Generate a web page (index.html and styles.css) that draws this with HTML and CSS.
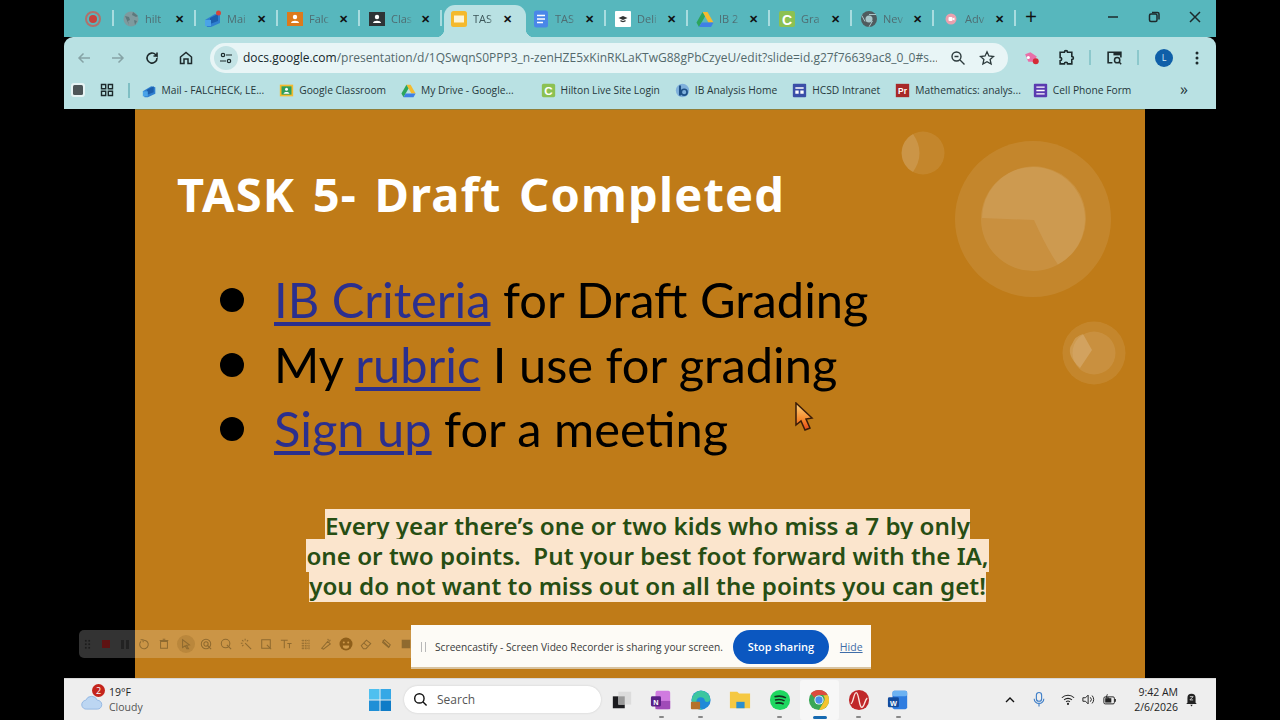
FILE: index.html
```html
<!DOCTYPE html>
<html lang="en">
<head>
<meta charset="utf-8">
<title>TASK 5 - Draft Completed</title>
<link rel="stylesheet" href="styles.css">
</head>
<body>
<div class="window">
  <header class="tabstrip">
    <div class="tab tab-pin">
      <svg class="fav" viewBox="0 0 18 18"><circle cx="9" cy="9" r="7" fill="none" stroke="#b0716c" stroke-width="2"/><circle cx="9" cy="9" r="4" fill="#c8423c"/></svg>
      <i class="sep"></i>
    </div>
    <div class="tab">
      <svg class="fav" viewBox="0 0 18 18"><circle cx="9" cy="9" r="7.5" fill="#7f9a9e"/><path d="M3 6l4 1 1 3-2 1 1 4M11 2l-1 3 4 2 2-1M12 10l3 1-2 4z" fill="#5d787c"/></svg>
      <span class="tab-title">hilt</span><span class="x">✕</span><i class="sep"></i>
    </div>
    <div class="tab">
      <svg class="fav" viewBox="0 0 18 18"><path d="M1 10l10-6 5 1v8l-9 4H3z" fill="#2f7fd0"/><path d="M6 8l8-4v7l-8 3z" fill="#1b5fae"/><rect x="1" y="10" width="6" height="6" fill="#4aa3e8"/><circle cx="14.500" cy="3" r="2.500" fill="#d6453c"/></svg>
      <span class="tab-title">Mai</span><span class="x">✕</span><i class="sep"></i>
    </div>
    <div class="tab">
      <svg class="fav" viewBox="0 0 18 18"><rect x="1" y="2" width="16" height="14" fill="#dc7a1c"/><circle cx="9" cy="7" r="2.200" fill="#fff"/><path d="M5 13c0-3 8-3 8 0z" fill="#fff"/></svg>
      <span class="tab-title">Falc</span><span class="x">✕</span><i class="sep"></i>
    </div>
    <div class="tab">
      <svg class="fav" viewBox="0 0 18 18"><rect x="1" y="2" width="16" height="14" fill="#2e3436"/><circle cx="9" cy="7" r="2.200" fill="#fff"/><path d="M5 13c0-3 8-3 8 0z" fill="#fff"/></svg>
      <span class="tab-title">Clas</span><span class="x">✕</span><i class="sep"></i>
    </div>
    <div class="tab tab-active">
      <svg class="fav" viewBox="0 0 18 18"><rect x="1" y="1" width="16" height="16" rx="2.500" fill="#f4b92d"/><rect x="4" y="5.500" width="10" height="7" fill="#fdf4d6"/></svg>
      <span class="tab-title">TAS</span><span class="x">✕</span>
    </div>
    <div class="tab">
      <svg class="fav" viewBox="0 0 18 18"><rect x="2" y="0.500" width="14" height="17" rx="2.500" fill="#4a87e8"/><path d="M5 5.500h8M5 9h8M5 12.500h6" stroke="#fff" stroke-width="1.500"/></svg>
      <span class="tab-title">TAS</span><span class="x">✕</span><i class="sep"></i>
    </div>
    <div class="tab">
      <svg class="fav" viewBox="0 0 18 18"><rect x="1" y="1" width="16" height="16" rx="1" fill="#fff"/><path d="M4.500 8L9 6l4.500 2L9 10z" fill="#333"/><path d="M6.500 10v1.500l2.500.8 2.500-.8V10L9 11z" fill="#333"/></svg>
      <span class="tab-title">Deli</span><span class="x">✕</span><i class="sep"></i>
    </div>
    <div class="tab">
      <svg class="fav" viewBox="0 0 18 18"><path d="M6.500 2h5l6 10.500h-5z" fill="#f5bb2e"/><path d="M6.500 2L.500 12.500 3 17l6-10.500z" fill="#2ca55c"/><path d="M3 17h12l2.500-4.500h-12z" fill="#3f7fe6"/></svg>
      <span class="tab-title">IB 2</span><span class="x">✕</span><i class="sep"></i>
    </div>
    <div class="tab">
      <svg class="fav" viewBox="0 0 18 18"><rect x="1" y="1" width="16" height="16" rx="2" fill="#8cc152"/><text class="fav-letter" x="9" y="14.500">C</text></svg>
      <span class="tab-title">Gra</span><span class="x">✕</span><i class="sep"></i>
    </div>
    <div class="tab">
      <svg class="fav" viewBox="0 0 18 18"><circle cx="9" cy="9" r="8" fill="#4f5b5e"/><circle cx="9" cy="9" r="3.500" fill="#a9c6c9"/><path d="M9 4.500h7M5 11.500L1.800 5.500M12.500 11L9 16.800" stroke="#a9c6c9" stroke-width="1"/></svg>
      <span class="tab-title">Nev</span><span class="x">✕</span><i class="sep"></i>
    </div>
    <div class="tab">
      <svg class="fav" viewBox="0 0 18 18"><circle cx="9" cy="9" r="5.500" fill="#e9a0ae"/><rect x="6.500" y="7" width="4" height="4" rx="1" fill="#fff"/><path d="M10.500 8.500l2-1v3l-2-1z" fill="#fff"/></svg>
      <span class="tab-title">Adv</span><span class="x">✕</span><i class="sep"></i>
    </div>
    <span class="newtab">+</span>
    <div class="winctl">
      <svg class="ctl" viewBox="0 0 14 14"><path d="M2 7h10" stroke="#1d2a2c" stroke-width="1.500"/></svg>
      <svg class="ctl" viewBox="0 0 14 14"><rect x="2.500" y="4" width="7.500" height="7.500" rx="1.500" fill="none" stroke="#1d2a2c" stroke-width="1.500"/><path d="M5 2.500h5.500a1.500 1.500 0 0 1 1.500 1.500v5.500" fill="none" stroke="#1d2a2c" stroke-width="1.500"/></svg>
      <svg class="ctl" viewBox="0 0 14 14"><path d="M2 2l10 10M12 2L2 12" stroke="#1d2a2c" stroke-width="1.500"/></svg>
    </div>
  </header>

  <nav class="toolbar">
    <svg class="tool" viewBox="0 0 16 16"><path d="M14 8H3M7.500 3.500L3 8l4.500 4.500" fill="none" stroke="#86a3a6" stroke-width="1.500"/></svg>
    <svg class="tool" viewBox="0 0 16 16"><path d="M2 8h11M8.500 3.500L13 8l-4.500 4.500" fill="none" stroke="#86a3a6" stroke-width="1.500"/></svg>
    <svg class="tool" viewBox="0 0 16 16"><path d="M13 8a5 5 0 1 1-1.500-3.500L13 6V2.500M13 6H9.500" fill="none" stroke="#1d2a2c" stroke-width="1.600"/></svg>
    <svg class="tool" viewBox="0 0 16 16"><path d="M2.500 7L8 2.500 13.500 7v6.500H10V9H6v4.500H2.500z" fill="none" stroke="#1d2a2c" stroke-width="1.500"/></svg>
    <div class="omnibox">
      <span class="site-chip"><svg class="site-ic" viewBox="0 0 14 14"><circle cx="4" cy="4" r="1.700" fill="none" stroke="#1d2a2c" stroke-width="1.200"/><circle cx="10" cy="10" r="1.700" fill="none" stroke="#1d2a2c" stroke-width="1.200"/><path d="M7 4h6M1 10h6" stroke="#1d2a2c" stroke-width="1.200"/></svg></span>
      <span class="url"><b>docs.google.com</b>/presentation/d/1QSwqnS0PPP3_n-zenHZE5xKinRKLaKTwG88gPbCzyeU/edit?slide=id.g27f76639ac8_0_0#s...</span>
      <svg class="omni-ic" viewBox="0 0 16 16"><circle cx="6.500" cy="6.500" r="4.500" fill="none" stroke="#2c3a3c" stroke-width="1.400"/><path d="M10 10l4.500 4.500M4.500 6.500h4" stroke="#2c3a3c" stroke-width="1.400"/></svg>
      <svg class="omni-ic" viewBox="0 0 16 16"><path d="M8 1.800l1.900 4.200 4.600.5-3.400 3 1 4.500-4.100-2.300L3.900 14l1-4.500-3.400-3 4.600-.5z" fill="none" stroke="#2c3a3c" stroke-width="1.300"/></svg>
    </div>
    <svg class="ext" viewBox="0 0 16 16"><path d="M2 5l5-2 6 4-3 5H5z" fill="#e86fa8"/><circle cx="5" cy="8" r="1.500" fill="#fff"/><circle cx="12" cy="11.500" r="2.800" fill="#d42a35"/></svg>
    <svg class="tool2" viewBox="0 0 16 16"><path d="M2 3h4a1.500 1.500 0 0 1 3 0h4v4a1.500 1.500 0 0 1 0 3v4H9a1.500 1.500 0 0 0-3 0H2v-3a1.500 1.500 0 0 0 0-3z" fill="none" stroke="#1d2a2c" stroke-width="1.500"/></svg>
    <i class="tsep"></i>
    <svg class="tool2" viewBox="0 0 16 16"><path d="M6 13H2V3h12v5" fill="none" stroke="#1d2a2c" stroke-width="1.500"/><path d="M7 3h7v3H7z" fill="#1d2a2c"/><circle cx="10.500" cy="10.500" r="2.500" fill="none" stroke="#1d2a2c" stroke-width="1.400"/><path d="M12.300 12.300l2 2" stroke="#1d2a2c" stroke-width="1.400"/></svg>
    <i class="tsep"></i>
    <span class="avatar">L</span>
    <svg class="menu" viewBox="0 0 4 16"><circle cx="2" cy="3" r="1.500" fill="#1d2a2c"/><circle cx="2" cy="8" r="1.500" fill="#1d2a2c"/><circle cx="2" cy="13" r="1.500" fill="#1d2a2c"/></svg>
  </nav>

  <div class="bookmarks">
    <svg class="bm-first" viewBox="0 0 16 16"><rect x="1" y="1" width="14" height="14" rx="3" fill="#e6f4f5"/><rect x="3" y="3" width="10" height="10" rx="1.500" fill="#4d5659"/></svg>
    <svg class="bm-grid" viewBox="0 0 14 14"><path d="M1.500 1.500h4.200v4.200H1.500zM8.300 1.500h4.200v4.200H8.300zM1.500 8.300h4.200v4.200H1.500zM8.300 8.300h4.200v4.200H8.300z" fill="none" stroke="#1d2a2c" stroke-width="1.400"/></svg>
    <i class="bsep"></i>
    <div class="bm"><svg class="bm-ic" viewBox="0 0 18 18"><path d="M1 10l10-6 5 1v8l-9 4H3z" fill="#2f7fd0"/><path d="M6 8l8-4v7l-8 3z" fill="#1b5fae"/><rect x="1" y="10" width="6" height="6" fill="#4aa3e8"/></svg>Mail - FALCHECK, LE...</div>
    <div class="bm"><svg class="bm-ic" viewBox="0 0 18 18"><rect x="1" y="2" width="16" height="14" fill="#f5bb2e"/><rect x="3" y="4" width="12" height="10" fill="#2f9e5c"/><circle cx="9" cy="7.500" r="1.800" fill="#fff"/><path d="M5.500 13c0-3 7-3 7 0z" fill="#fff"/></svg>Google Classroom</div>
    <div class="bm bm-wide"><svg class="bm-ic" viewBox="0 0 18 18"><path d="M6.500 2h5l6 10.500h-5z" fill="#f5bb2e"/><path d="M6.500 2L.500 12.500 3 17l6-10.500z" fill="#2ca55c"/><path d="M3 17h12l2.500-4.500h-12z" fill="#3f7fe6"/></svg>My Drive - Google...</div>
    <div class="bm"><svg class="bm-ic" viewBox="0 0 18 18"><rect x="1" y="1" width="16" height="16" rx="2" fill="#8cc152"/><text class="fav-letter" x="9" y="14.500">C</text></svg>Hilton Live Site Login</div>
    <div class="bm"><svg class="bm-ic" viewBox="0 0 18 18"><circle cx="9" cy="9" r="8" fill="#7fb0dc"/><path d="M6 3v12" stroke="#1d4f86" stroke-width="2.500"/><circle cx="11" cy="11" r="3.500" fill="none" stroke="#1d4f86" stroke-width="2"/></svg>IB Analysis Home</div>
    <div class="bm"><svg class="bm-ic" viewBox="0 0 18 18"><rect x="1" y="1" width="16" height="16" rx="1" fill="#3b4fa8"/><path d="M4 5h10v2H4zM4 9h4v4H4zM10 9h4v4h-4z" fill="#fff"/></svg>HCSD Intranet</div>
    <div class="bm bm-tight"><svg class="bm-ic" viewBox="0 0 18 18"><rect x="1" y="1" width="16" height="16" fill="#a82828"/><text class="fav-pr" x="9" y="13.500">Pr</text></svg>Mathematics: analys...</div>
    <div class="bm"><svg class="bm-ic" viewBox="0 0 18 18"><rect x="1" y="1" width="16" height="16" rx="1" fill="#5a3bb0"/><path d="M4 5h10M4 9h10M4 13h10" stroke="#fff" stroke-width="1.600"/></svg>Cell Phone Form</div>
    <span class="bm-more">»</span>
  </div>

  <main class="stage">
    <section class="slide">
      <svg class="deco" viewBox="0 0 1010 569">
        <g fill="#fff">
          <circle cx="898" cy="110" r="78" opacity=".09"/>
          <circle cx="898" cy="110" r="52" opacity=".09"/>
          <path d="M847 109A52 52 0 1 1 923 155.500Q912 140 899 111z" opacity=".09"/>
          <circle cx="788" cy="44" r="21.500" opacity=".09"/>
          <path d="M778 25Q791 44 778 63A21.500 21.500 0 0 1 778 25z" opacity=".13"/>
          <circle cx="959" cy="244" r="31.500" opacity=".09"/>
          <circle cx="959" cy="244" r="21.500" opacity=".09"/>
          <path d="M948 225L957 241 945 259Q930 245 937 235 940 227 948 225z" opacity=".17"/>
        </g>
      </svg>
      <h1 class="title">TASK 5- Draft Completed</h1>
      <ul class="points">
        <li><a>IB Criteria</a> for Draft Grading</li>
        <li>My <a>rubric</a> I use for grading</li>
        <li><a>Sign up</a> for a meeting</li>
      </ul>
      <p class="note"><span>Every year there’s one or two kids who miss a 7 by only<br>one or two points.&nbsp; Put your best foot forward with the IA,<br>you do not want to miss out on all the points you can get!</span></p>
      <svg class="cursor" viewBox="0 0 20 30"><defs><linearGradient id="cg" x1="0" y1="0" x2="0" y2="1"><stop offset="0" stop-color="#fdd27a"/><stop offset=".6" stop-color="#f58a2c"/><stop offset="1" stop-color="#e8481c"/></linearGradient></defs><path d="M2 1l16 15-6 1 4 9-5 2-4-9-5 4z" fill="url(#cg)" stroke="#3a1c08" stroke-width="1.500"/></svg>
    </section>
  </main>

  <footer class="taskbar">
    <div class="weather">
      <svg class="cloud" viewBox="0 0 24 18"><path d="M6 17a5 5 0 0 1-1-10 7 7 0 0 1 13 0 5 5 0 0 1 0 10z" fill="#bcd6f2" stroke="#8fb5e2"/></svg>
      <span class="badge">2</span>
      <div class="weather-text"><span>19°F</span><span class="muted">Cloudy</span></div>
    </div>
    <div class="task-center">
      <svg class="winlogo" viewBox="0 0 22 22"><path d="M0 0h10.500v10.500H0z" fill="#4fc0ef"/><path d="M11.500 0H22v10.500H11.500z" fill="#35a8e6"/><path d="M0 11.500h10.500V22H0z" fill="#1f8fd6"/><path d="M11.500 11.500H22V22H11.500z" fill="#0f7cc7"/></svg>
      <div class="search"><svg class="search-ic" viewBox="0 0 16 16"><circle cx="6.800" cy="6.800" r="5" fill="none" stroke="#111" stroke-width="1.500"/><path d="M10.500 10.500l4 4" stroke="#111" stroke-width="1.500"/></svg>Search</div>
      <div class="apps">
        <span class="app"><svg class="app-ic" viewBox="0 0 24 24"><rect x="2" y="8" width="13" height="13" fill="#1b1b1f"/><rect x="8" y="3" width="14" height="14" fill="#dcdcdc"/><rect x="8" y="8" width="7" height="9" fill="#9a9a9a"/></svg></span>
        <span class="app"><svg class="app-ic" viewBox="0 0 24 24"><rect x="6" y="2" width="16" height="20" rx="2" fill="#d07be0"/><rect x="6" y="13" width="16" height="9" fill="#a04bb8"/><rect x="1" y="8" width="11" height="11" rx="1.500" fill="#5a1f86"/><text class="app-letter" x="6.500" y="17">N</text></svg><i class="dot"></i></span>
        <span class="app"><svg class="app-ic" viewBox="0 0 24 24"><circle cx="12" cy="12" r="10.500" fill="#1f8ad8"/><path d="M2 13a10 10 0 0 1 20-2c0 4-6 4-6 1 0-4-9-5-9 2 0 4 3 7 7 8a10 10 0 0 1-12-9z" fill="#3cc6a0"/><rect x="1" y="14" width="10" height="8" rx="1" fill="#b5722a"/></svg><i class="dot"></i></span>
        <span class="app"><svg class="app-ic" viewBox="0 0 24 24"><path d="M1 3h8l2 2h12v16H1z" fill="#f5c842"/><rect x="8" y="14" width="9" height="7" fill="#2b8fd0"/></svg></span>
        <span class="app"><svg class="app-ic" viewBox="0 0 24 24"><circle cx="12" cy="12" r="11" fill="#1ed760"/><path d="M6 8.500c4-1 9-.8 12.500 1.200M6.500 12c3.500-.8 8-.5 10.500 1M7 15.500c3-.6 6.500-.4 9 .8" fill="none" stroke="#14301f" stroke-width="1.800"/></svg><i class="dot"></i></span>
        <span class="app app-on"><svg class="app-ic" viewBox="0 0 24 24"><circle cx="12" cy="12" r="11" fill="#3aa757"/><path d="M12 1a11 11 0 0 1 9.500 5.500H12a5.500 5.500 0 0 0-5 3L3 5A11 11 0 0 1 12 1z" fill="#dd4b3e"/><path d="M21.500 6.500A11 11 0 0 1 12 23l4.800-8.300A5.500 5.500 0 0 0 16.500 7z" fill="#f5c32e"/><circle cx="12" cy="12" r="5" fill="#fff"/><circle cx="12" cy="12" r="4" fill="#4a8fe8"/></svg><i class="dash"></i></span>
        <span class="app"><svg class="app-ic" viewBox="0 0 24 24"><circle cx="12" cy="12" r="11" fill="#c0282a"/><path d="M3 16c3 0 3-12 6-12s3 16 6 16 3-8 6-10" fill="none" stroke="#fbe6e0" stroke-width="1.500"/></svg><i class="dot"></i></span>
        <span class="app"><svg class="app-ic" viewBox="0 0 24 24"><rect x="6" y="2" width="16" height="20" rx="2" fill="#2f7de0"/><rect x="6" y="2" width="16" height="6" rx="2" fill="#6cb2f2"/><rect x="1" y="9" width="12" height="11" rx="1.500" fill="#124c9e"/><text class="app-letter" x="7" y="18">W</text></svg><i class="dot"></i></span>
      </div>
    </div>
    <div class="tray">
      <svg class="tray-ic caret" viewBox="0 0 12 12"><path d="M2 8l4-4 4 4" fill="none" stroke="#111" stroke-width="1.400"/></svg>
      <svg class="tray-ic mic" viewBox="0 0 16 18"><rect x="5" y="1" width="6" height="10" rx="3" fill="none" stroke="#3f7fc8" stroke-width="1.300"/><path d="M2.500 8a5.500 5.500 0 0 0 11 0M8 13.500V17" fill="none" stroke="#3f7fc8" stroke-width="1.300"/></svg>
      <svg class="tray-ic wifi" viewBox="0 0 16 14"><path d="M1 5a10 10 0 0 1 14 0M3.500 7.500a6.500 6.500 0 0 1 9 0M5.800 9.800a3.200 3.200 0 0 1 4.400 0" fill="none" stroke="#222" stroke-width="1.200"/><circle cx="8" cy="12" r="1.200" fill="#222"/></svg>
      <svg class="tray-ic" viewBox="0 0 16 14"><path d="M1 5h3l3-3v10L4 9H1z" fill="none" stroke="#222" stroke-width="1.100"/><path d="M9.500 4.500a3.500 3.500 0 0 1 0 5M11.500 2.500a6.500 6.500 0 0 1 0 9" fill="none" stroke="#222" stroke-width="1.100"/></svg>
      <svg class="tray-ic" viewBox="0 0 16 14"><rect x="1" y="4" width="12" height="8" rx="1.500" fill="none" stroke="#222" stroke-width="1.100"/><rect x="2.500" y="5.500" width="7" height="5" fill="#222"/><path d="M14 6.500v3" stroke="#222" stroke-width="1.400"/><path d="M5 1L3.500 5h3L5 8" fill="none" stroke="#222"/></svg>
      <div class="clock"><span>9:42 AM</span><span>2/6/2026</span></div>
      <svg class="bell" viewBox="0 0 16 18"><path d="M3 13V7a5 5 0 0 1 10 0v6l1.500 1.500h-13z" fill="#222"/><path d="M6.500 15.500h3L8 17.500z" fill="#222"/><path d="M6 5.500h4L6 9.500h4" fill="none" stroke="#eee"/></svg>
    </div>
  </footer>
</div>

<div class="recbar">
  <i class="grip"></i>
  <i class="stop"></i>
  <i class="pause"></i>
  <svg class="rec-ic" viewBox="0 0 14 14"><path d="M7 2.500a5 5 0 1 1-3.500 1.400M3 2h3v3"/></svg>
  <svg class="rec-ic" viewBox="0 0 14 14"><path d="M3 4h8v8H3zM2 3h10M5.500 1.500h3"/></svg>
  <span class="rec-on"><svg class="rec-in" viewBox="0 0 14 14"><path d="M3 2l8 6-3.500.5L10 12.500H8L6 9l-3 2z"/></svg></span>
  <svg class="rec-ic" viewBox="0 0 14 14"><circle cx="7" cy="7" r="5.500"/><circle cx="7" cy="7" r="2.500"/><path d="M8 8l5 5"/></svg>
  <svg class="rec-ic" viewBox="0 0 14 14"><circle cx="6.500" cy="6.500" r="5"/><path d="M8 8l5 5"/></svg>
  <svg class="rec-ic" viewBox="0 0 14 14"><path d="M6 6l7 7M6 1v2M1 6h2M2.500 2.500L4 4M9.500 2.500L8 4M2.500 9.500L4 8"/></svg>
  <svg class="rec-ic" viewBox="0 0 14 14"><path d="M2 2h10v10H2zM8 8l5 5"/></svg>
  <svg class="rec-ic" viewBox="0 0 14 14"><path d="M1 2.500h8M5 2.500V12M8.500 6.500h5M11 6.500V12"/></svg>
  <svg class="rec-ic" viewBox="0 0 14 14"><path d="M2 3h10M2 6h10M2 9h10M2 12h10M3.500 2v11M7 2v11M10.500 2v11" stroke-dasharray="1 1"/></svg>
  <svg class="rec-ic" viewBox="0 0 14 14"><path d="M2 12l7-8 3 3-8 6zM9 1l1 2M12 2l-1 2"/></svg>
  <svg class="rec-face" viewBox="0 0 14 14"><circle cx="7" cy="7" r="6.500"/><circle cx="4.800" cy="5.500" r="1" class="hole"/><circle cx="9.200" cy="5.500" r="1" class="hole"/><path d="M3.800 8.500h6.400a3.200 3.200 0 0 1-6.400 0z" class="hole"/></svg>
  <svg class="rec-ic" viewBox="0 0 14 14"><path d="M1.500 9l6-6.500 5 4-5.500 6H4zM4.500 6l5 4"/></svg>
  <svg class="rec-ic" viewBox="0 0 14 14"><path d="M3 3l8 8M5 2l7 6-2 3-7-6z"/></svg>
  <svg class="rec-ic" viewBox="0 0 14 14"><path d="M2 2h10v10H2z" class="solid"/></svg>
</div>

<aside class="sharebar">
  <i class="share-grip"></i>
  <span class="share-text">Screencastify - Screen Video Recorder is sharing your screen.</span>
  <span class="stop-share">Stop sharing</span>
  <a class="hide">Hide</a>
</aside>
</body>
</html>
```

FILE: styles.css
```css
* { box-sizing: border-box; }
html, body { margin: 0; height: 720px; overflow: hidden; background: #000; }
body { position: relative; font-family: "Open Sans", "Noto Sans", sans-serif; color: #1d2a2c; padding: 0 64px; }
svg { display: block; flex: none; }

.window { width: 1152px; height: 720px; display: flex; flex-direction: column; background: #000; }

/* tab strip */
.tabstrip { height: 37px; background: #57b7bd; display: flex; align-items: flex-end; padding-left: 11px; flex: none; }
.tab { position: relative; width: 82px; height: 32px; display: flex; align-items: center; padding: 0 0 5px 6px; flex: none; }
.tab-pin { width: 41px; padding-left: 9px; }
.fav { width: 18px; height: 18px; }
.tab-title { width: 22px; margin-left: 5px; font-size: 11px; color: #4f6d72; overflow: hidden; white-space: nowrap; -webkit-mask-image: linear-gradient(90deg, #000 70%, transparent); mask-image: linear-gradient(90deg, #000 70%, transparent); }
.x { width: 16px; margin-left: 4px; font-size: 11px; font-weight: 700; text-align: center; color: #111; line-height: 16px; }
.sep { position: absolute; right: 2px; top: 5px; width: 2px; height: 16px; background: #a8dcdf; }
.tab-active { background: #b9e1e3; border-radius: 11px 11px 0 0; }
.tab-active .tab-title { color: #3c5659; }
.tab-active::before, .tab-active::after { content: ""; position: absolute; bottom: 0; width: 8px; height: 8px; }
.tab-active::before { left: -8px; background: radial-gradient(circle at 0 0, transparent 8px, #b9e1e3 8.500px); }
.tab-active::after { right: -8px; background: radial-gradient(circle at 100% 0, transparent 8px, #b9e1e3 8.500px); }
.fav-letter { font: 700 14px "Liberation Sans", sans-serif; fill: #fff; text-anchor: middle; }
.fav-pr { font: 700 10px "Liberation Sans", sans-serif; fill: #fff; text-anchor: middle; }
.newtab { width: 26px; padding-bottom: 6px; font-size: 21px; line-height: 30px; text-align: center; color: #111; }
.winctl { margin-left: auto; display: flex; align-items: center; gap: 27px; height: 37px; padding: 0 14px 3px 0; align-self: flex-start; }
.ctl { width: 14px; height: 14px; }

/* toolbar */
.toolbar { height: 36px; background: #b9e1e3; border-radius: 9px 9px 0 0; display: flex; align-items: center; padding: 5px 0 0 12px; flex: none; }
.tool { width: 16px; height: 16px; margin-right: 18px; }
.omnibox { width: 798px; height: 30px; margin-left: -2px; background: #e8f5f6; border-radius: 15px; display: flex; align-items: center; padding: 0 13px 0 4px; flex: none; }
.site-chip { width: 24px; height: 24px; border-radius: 50%; background: #c3e3e5; display: flex; align-items: center; justify-content: center; flex: none; }
.site-ic { width: 14px; height: 14px; }
.url { margin-left: 5px; flex: 1; font-size: 12px; color: #53696c; white-space: nowrap; overflow: hidden; }
.url b { font-weight: 400; color: #14262a; }
.omni-ic { width: 16px; height: 16px; margin-left: 13px; }
.ext { width: 17px; height: 17px; margin-left: 15px; }
.tool2 { width: 17px; height: 17px; margin-left: 18px; }
.tsep { width: 2px; height: 15px; background: #8cc8cc; margin-left: 14px; }
.tsep + .tool2 { margin-left: 15px; }
.tsep + .avatar { margin-left: 16px; }
.avatar { width: 18px; height: 18px; border-radius: 50%; background: #0f5fa8; color: #d6ecf5; font-size: 9px; text-align: center; line-height: 18px; }
.menu { width: 4px; height: 16px; margin-left: 22px; }

/* bookmarks */
.bookmarks { height: 36px; background: #b9e1e3; display: flex; align-items: center; padding: 0 0 2px 6px; font-size: 10.250px; color: #26383b; flex: none; }
.bm-first { width: 16px; height: 16px; }
.bm-grid { width: 14px; height: 14px; margin-left: 14px; }
.bsep { width: 1.500px; height: 15px; background: #7fbfc4; margin-left: 14px; margin-right: 12px; }
.bm { display: flex; align-items: center; margin-right: 15px; white-space: nowrap; }
.bm-wide { margin-right: 27px; }
.bm-tight { margin-right: 12px; }
.bm-ic { width: 15px; height: 15px; margin-right: 5px; }
.bm-more { margin-left: auto; margin-right: 28px; font-size: 16px; line-height: 16px; padding-bottom: 3px; }

/* stage */
.stage { flex: 1; min-height: 0; background: #000; display: flex; justify-content: center; }
.slide { position: relative; width: 1010px; background: #bf7b18; border-top: 1px solid #8f7f3a; display: flex; flex-direction: column; }
.deco { position: absolute; left: 0; top: -1px; width: 1010px; height: 569px; }
.title { position: relative; margin: 52px 0 0 42px; font: 700 47px/64px "Noto Sans", sans-serif; color: #fff; letter-spacing: 1.200px; word-spacing: 4px; white-space: nowrap; }
.points { position: relative; list-style: none; margin: 41px 0 0 84px; padding: 0; font: 400 48.800px/64.500px Lato, sans-serif; color: #000; }
.points li { position: relative; padding-left: 55px; white-space: nowrap; }
.points li::before { content: ""; position: absolute; left: 1px; top: 21px; width: 24px; height: 24px; border-radius: 50%; background: #000; }
.points a { color: #2b2f8e; text-decoration: underline; text-decoration-thickness: 3.500px; text-underline-offset: 4px; }
.note { position: relative; margin: 50px 0 0; text-align: center; font: 600 24.200px/30px "Noto Sans", sans-serif; color: #274e13; padding-left: 15px; white-space: nowrap; }
.note span { background: #fbe5cd; }
.cursor { position: absolute; left: 659px; top: 292px; width: 20px; height: 30px; }

/* taskbar */
.taskbar { height: 42px; background: #eeeeee; border-top: 1px solid #d8d8d8; display: flex; align-items: center; flex: none; position: relative; font-family: "Open Sans", sans-serif; }
.weather { position: relative; width: 305px; display: flex; align-items: center; padding-left: 17px; flex: none; }
.cloud { width: 22px; height: 16px; margin-top: 4px; }
.badge { position: absolute; left: 28px; top: -1px; width: 13px; height: 13px; border-radius: 50%; background: #c4241c; color: #fff; font-size: 9px; line-height: 13px; text-align: center; }
.weather-text { display: flex; flex-direction: column; margin-left: 6px; font-size: 10.500px; line-height: 15px; color: #222; }
.muted { color: #555; }
.task-center { display: flex; align-items: center; flex: none; }
.winlogo { width: 22px; height: 22px; }
.search { width: 197px; height: 27px; margin-left: 13px; background: #fff; border-radius: 14px; box-shadow: 0 0 2px #c8c8c8; display: flex; align-items: center; padding-left: 9px; font-size: 12px; color: #555; flex: none; }
.search-ic { width: 15px; height: 15px; margin-right: 9px; }
.apps { display: flex; margin-left: 1px; }
.app { position: relative; width: 39.500px; height: 40px; display: flex; align-items: center; justify-content: center; flex: none; }
.app-ic { width: 22px; height: 22px; }
.app-on { background: #f7f7f7; border-radius: 3px; }
.app-letter { font: 700 8px "Liberation Sans", sans-serif; fill: #fff; text-anchor: middle; }
.dot { position: absolute; bottom: 2px; left: 17px; width: 5px; height: 2px; border-radius: 1px; background: #888; }
.dash { position: absolute; bottom: 1px; left: 13px; width: 14px; height: 3px; border-radius: 2px; background: #1569b0; }
.tray { margin-left: auto; display: flex; align-items: center; padding-right: 18px; flex: none; }
.tray-ic { width: 14px; height: 13px; margin-left: 7px; }
.caret { width: 12px; height: 12px; }
.mic { margin-left: 16px; width: 14px; height: 17px; }
.wifi { margin-left: 15px; }
.clock { display: flex; flex-direction: column; align-items: flex-end; margin-left: 17px; font-size: 10.500px; line-height: 14.500px; color: #222; }
.bell { width: 13px; height: 15px; margin-left: 7px; }

/* screencastify toolbar, over the page */
.recbar { position: absolute; left: 79px; top: 630px; width: 332px; height: 28px; border-radius: 5px 0 0 5px; background: rgba(255,255,255,.2); display: flex; align-items: center; padding-left: 4.500px; overflow: hidden; }
.grip { flex: none; width: 7px; height: 10px; margin-right: 11.500px; background: radial-gradient(circle, #1c1c1c 0.800px, transparent 1px) 0 0/3.500px 3.500px; }
.stop { flex: none; width: 8px; height: 8px; background: #5e1212; margin-right: 11px; }
.pause { flex: none; width: 8px; height: 9px; border-left: 3px solid #222; border-right: 3px solid #222; margin-right: 9px; }
.rec-ic { width: 12px; height: 12px; fill: none; stroke: #8f6a2f; stroke-width: 1.200; margin-right: 8px; }
.rec-in { width: 12px; height: 12px; fill: none; stroke: #8f6a2f; stroke-width: 1.200; }
.rec-on { width: 18px; height: 18px; border-radius: 50%; background: rgba(120,80,20,.2); display: flex; align-items: center; justify-content: center; margin: 0 5px 0 -1px; flex: none; }
.rec-face { width: 14px; height: 14px; fill: #8f5f1a; margin: 0 7px 0 -1px; }
.rec-face .hole { fill: #cf9a4a; }
.rec-ic .solid { fill: #8f6a2f; stroke: none; }

/* sharing notice, over the page */
.sharebar { position: absolute; left: 411px; top: 625px; width: 460px; height: 44px; background: #fdfbf6; border-bottom: 2px solid #d8c3a0; display: flex; align-items: center; padding: 2px 0 0 10px; font-size: 10.200px; color: #3b3b3b; }
.share-grip { width: 5px; height: 10px; border-left: 1.500px solid #b8b8b8; border-right: 1.500px solid #b8b8b8; flex: none; }
.share-text { margin-left: 9px; white-space: nowrap; }
.stop-share { margin-left: 10px; width: 96px; height: 34px; border-radius: 17px; background: #0b57c0; color: #fff; font-weight: 600; font-size: 11px; line-height: 34px; text-align: center; flex: none; }
.hide { margin-left: 11px; color: #3f6da8; text-decoration: underline; font-size: 10.500px; }
```
